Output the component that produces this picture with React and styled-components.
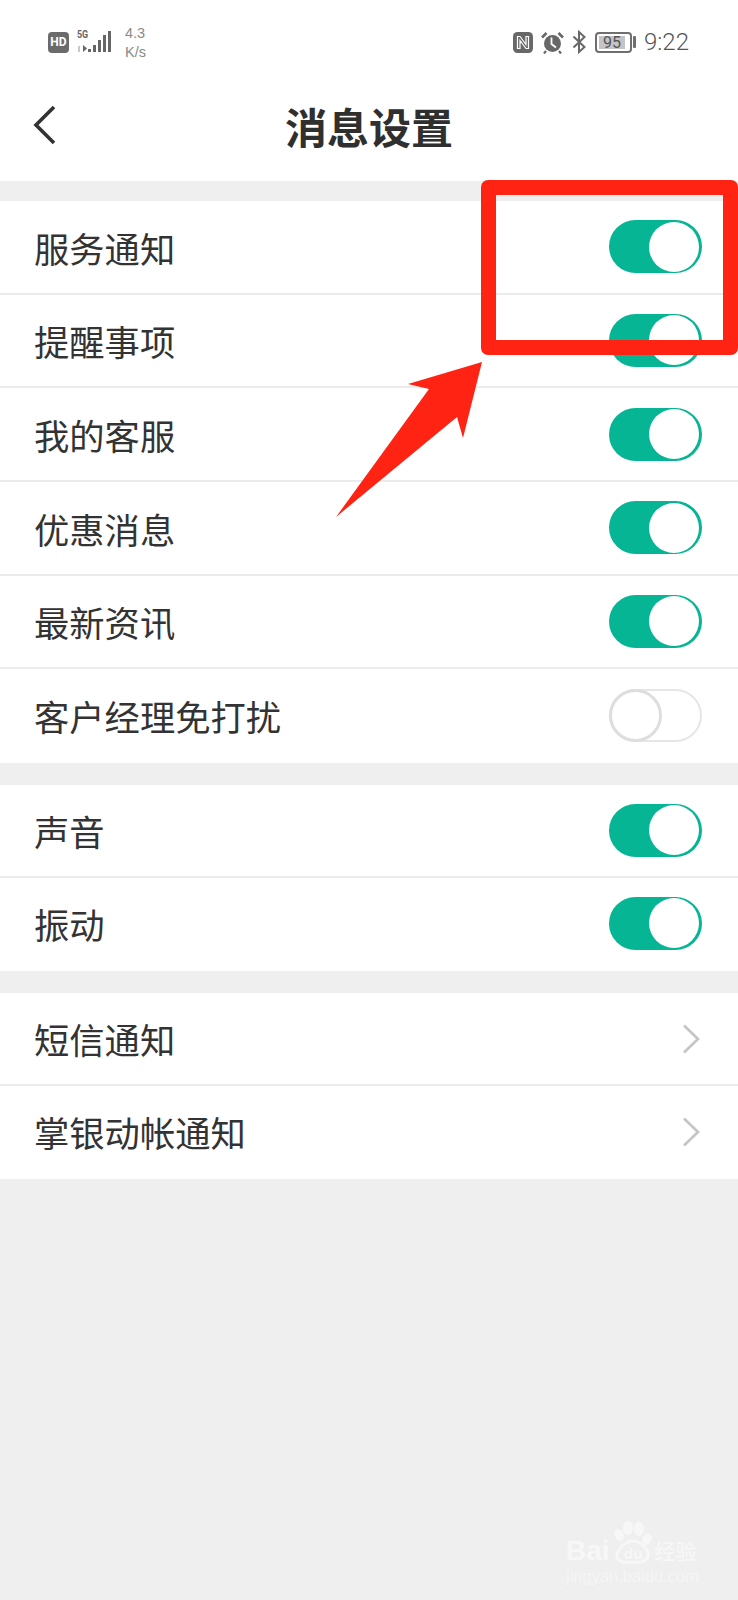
import styled, { createGlobalStyle } from "styled-components";

const GlobalStyle = createGlobalStyle`
  html, body {
    margin: 0;
    padding: 0;
    background: #efefef;
  }
  body {
    font-family: "Noto Sans CJK SC", "Noto Sans", sans-serif;
  }
`;

const Page = styled.div`
  position: relative;
  width: 738px;
  height: 1600px;
  overflow: hidden;
  background: #efefef;
`;

const Header = styled.header`
  height: 181px;
  background: #fff;
  margin-bottom: 20px;
`;

const StatusBar = styled.div`
  height: 85px;
  padding: 22px 49px 0 48px;
  box-sizing: border-box;
  display: flex;
  justify-content: space-between;
  align-items: flex-start;
  color: #6f6f6f;
`;

const StatusGroup = styled.div`
  display: flex;
  align-items: center;
  height: 40px;
  gap: 8px;
`;

const HdBadge = styled.span`
  width: 21px;
  height: 21px;
  border-radius: 4px;
  background: #6b6b6b;
  color: #fff;
  font: 700 12px/21px "Roboto", sans-serif;
  text-align: center;
`;

const SignalWrap = styled.div`
  position: relative;
  width: 34px;
  height: 22px;
`;

const FiveG = styled.span`
  position: absolute;
  left: 0;
  top: -2px;
  font: 700 10.5px/12px "Roboto", sans-serif;
  transform: scaleX(0.85);
  transform-origin: left;
  color: #666;
`;

const Speed = styled.div`
  margin-left: 6px;
  padding-top: 2px;
  font: 400 14.5px/19px "Liberation Sans", sans-serif;
  color: #8a8a8a;
`;

const Battery = styled.div`
  width: 37px;
  height: 21px;
  box-sizing: border-box;
  border: 2px solid #6f6f6f;
  border-radius: 4px;
  padding: 2px 5px 2px 2px;
  display: flex;
`;

const BatteryLevel = styled.div`
  flex: 1;
  background: #c4c4c4;
  color: #555;
  font: 400 16px/13px "Roboto", sans-serif;
  text-align: center;
`;

const BatteryNub = styled.div`
  width: 3px;
  height: 12px;
  margin-left: -7px;
  background: #6f6f6f;
  border-radius: 1px;
`;

const Clock = styled.span`
  font: 300 24px/30px "Roboto", sans-serif;
  color: #555;
`;

const NavBar = styled.div`
  position: relative;
  height: 96px;
  box-sizing: border-box;
  padding-bottom: 14px;
  display: flex;
  align-items: center;
  justify-content: center;
`;

const BackButton = styled.svg`
  position: absolute;
  left: 32px;
  top: 19px;
`;

const Title = styled.h1`
  margin: 0;
  font-size: 42px;
  font-weight: 700;
  line-height: 64px;
  color: #2f2f2f;
`;

const Section = styled.section`
  background: #fff;
  margin-bottom: 22px;
`;

const Row = styled.div`
  position: relative;
  height: ${(props) => props.$height || 93}px;
  padding: 0 36px 0 34px;
  box-sizing: border-box;
  display: flex;
  align-items: center;
  justify-content: space-between;

  &:not(:last-child)::after {
    content: "";
    position: absolute;
    left: 0;
    right: 0;
    bottom: 0;
    height: 2px;
    background: #ebebeb;
  }
`;

const Label = styled.span`
  font-size: 35.3px;
  line-height: 50px;
  color: #333;
`;

const Track = styled.div`
  width: 93px;
  height: 53px;
  margin-top: -2px;
  box-sizing: border-box;
  border-radius: 27px;
  display: flex;
  align-items: center;
  justify-content: ${(props) => (props.$on ? "flex-end" : "flex-start")};
  padding-right: ${(props) => (props.$on ? 3 : 0)}px;
  background: ${(props) => (props.$on ? "#06b593" : "#fff")};
  border: ${(props) => (props.$on ? "none" : "2.5px solid #e6e6e6")};
`;

const Knob = styled.div`
  width: ${(props) => (props.$on ? 50 : 53)}px;
  height: ${(props) => (props.$on ? 50 : 53)}px;
  flex-shrink: 0;
  box-sizing: border-box;
  border-radius: 50%;
  background: #fff;
  margin-left: ${(props) => (props.$on ? 0 : -2.5)}px;
  border: ${(props) => (props.$on ? "none" : "3px solid #dedede")};
`;

const Chevron = styled.svg`
  margin-right: 2px;
`;

const Callout = styled.div`
  position: absolute;
  left: 481px;
  top: 180px;
  width: 257px;
  height: 175px;
  box-sizing: border-box;
  border: 15px solid #fe2312;
  border-radius: 7px;
`;

const Arrow = styled.svg`
  position: absolute;
  left: 330px;
  top: 358px;
`;

const Watermark = styled.div`
  position: absolute;
  left: 566px;
  top: 1520px;
  width: 140px;
  color: #f7f7f7;
`;

const WatermarkLogo = styled.div`
  display: flex;
  align-items: flex-end;
  height: 44px;
  font: 700 28px/26px "Liberation Sans", sans-serif;
`;

const WatermarkCn = styled.span`
  margin-left: 1px;
  font-size: 21px;
  font-weight: 500;
  line-height: 27px;
  font-family: "Noto Sans CJK SC", sans-serif;
`;

const WatermarkUrl = styled.div`
  font: 400 16.5px/20px "Liberation Sans", sans-serif;
  margin-top: 2px;
  color: #f5f5f5;
`;

const Paw = styled.svg`
  margin-left: 4px;
`;

const PawText = styled.text`
  font: 700 15px "Liberation Sans", sans-serif;
  fill: #f7f7f7;
`;

const Toggle = ({ on }) => (
  <Track $on={on}>
    <Knob $on={on} />
  </Track>
);

const SignalBars = () => (
  <SignalWrap>
    <FiveG>5G</FiveG>
    <svg width="34" height="22" viewBox="0 0 34 22">
      <rect x="1" y="15" width="2" height="6" fill="#c8c8c8" />
      <path d="M6 14v7l4-3.5z" fill="#666" />
      <rect x="11" y="18" width="3" height="3" fill="#666" />
      <rect x="16" y="14" width="3" height="7" fill="#666" />
      <rect x="21" y="9" width="3" height="12" fill="#666" />
      <rect x="26" y="4" width="3" height="17" fill="#666" />
      <rect x="31" y="0" width="3" height="21" fill="#666" />
    </svg>
  </SignalWrap>
);

const NfcIcon = () => (
  <svg width="20" height="21" viewBox="0 0 20 21">
    <rect width="20" height="21" rx="4.5" fill="#686868" />
    <path
      d="M4.5 4.5v12h2.5V8.5l6 8h2.5v-12H13v8l-6-8z"
      fill="#686868"
      stroke="#fff"
      strokeWidth="1.2"
    />
  </svg>
);

const AlarmIcon = () => (
  <svg width="23" height="23" viewBox="0 0 23 23">
    <circle cx="11.5" cy="12.5" r="8.5" fill="#686868" />
    <path d="M10.5 6.5v6.5l4.5 3.5" fill="none" stroke="#fff" strokeWidth="1.8" />
    <path d="M1 6.5l4.5-4.5M22 6.5L17.5 2" stroke="#686868" strokeWidth="2.6" />
    <path d="M5 20l-2 2.5M18 20l2 2.5" stroke="#686868" strokeWidth="2.2" />
  </svg>
);

const BluetoothIcon = () => (
  <svg width="15" height="24" viewBox="0 0 15 24">
    <path
      d="M1.5 6.5l11 10.5-5.5 5V2l5.5 5-11 10.5"
      fill="none"
      stroke="#686868"
      strokeWidth="2"
    />
  </svg>
);

const BackIcon = () => (
  <BackButton width="26" height="42" viewBox="0 0 26 42">
    <path d="M22 3L4 21l18 18" fill="none" stroke="#333" strokeWidth="3.6" />
  </BackButton>
);

const ChevronIcon = () => (
  <Chevron width="18" height="30" viewBox="0 0 18 30">
    <path d="M2 1.5L16 15 2 28.5" fill="none" stroke="#c6c6c6" strokeWidth="2.8" />
  </Chevron>
);

// paw mark of the watermark, four toes over an outlined pad
const PawIcon = () => (
  <Paw width="40" height="44" viewBox="0 0 40 44" fill="none">
    <ellipse cx="5" cy="15" rx="4.5" ry="6" fill="#f7f7f7" transform="rotate(-30 5 15)" />
    <ellipse cx="14" cy="8" rx="5" ry="7" fill="#f7f7f7" />
    <ellipse cx="25" cy="9" rx="5" ry="7" fill="#f7f7f7" />
    <ellipse cx="33" cy="19" rx="4.5" ry="6" fill="#f7f7f7" transform="rotate(25 33 19)" />
    <path
      d="M19 21c7 0 16 8 15 15-1 6-9 7-15 6-6 1-15 0-16-5-1-7 9-16 16-16z"
      stroke="#f7f7f7"
      strokeWidth="3"
    />
    <PawText x="10" y="39">du</PawText>
  </Paw>
);

const mainRows = [
  { label: "服务通知", on: true },
  { label: "提醒事项", on: true },
  { label: "我的客服", on: true },
  { label: "优惠消息", on: true },
  { label: "最新资讯", on: true },
  { label: "客户经理免打扰", on: false },
];

const soundRows = [
  { label: "声音", on: true },
  { label: "振动", on: true },
];

const linkRows = ["短信通知", "掌银动帐通知"];

const App = () => {
  return (
    <Page>
      <GlobalStyle />
      <Header>
        <StatusBar>
          <StatusGroup>
            <HdBadge>HD</HdBadge>
            <SignalBars />
            <Speed>
              4.3
              <br />
              K/s
            </Speed>
          </StatusGroup>
          <StatusGroup>
            <NfcIcon />
            <AlarmIcon />
            <BluetoothIcon />
            <Battery>
              <BatteryLevel>95</BatteryLevel>
            </Battery>
            <BatteryNub />
            <Clock>9:22</Clock>
          </StatusGroup>
        </StatusBar>
        <NavBar>
          <BackIcon />
          <Title>消息设置</Title>
        </NavBar>
      </Header>

      <Section>
        {mainRows.map((row) => (
          <Row key={row.label} $height={93.67}>
            <Label>{row.label}</Label>
            <Toggle on={row.on} />
          </Row>
        ))}
      </Section>

      <Section>
        {soundRows.map((row) => (
          <Row key={row.label}>
            <Label>{row.label}</Label>
            <Toggle on={row.on} />
          </Row>
        ))}
      </Section>

      <Section>
        {linkRows.map((label) => (
          <Row key={label}>
            <Label>{label}</Label>
            <ChevronIcon />
          </Row>
        ))}
      </Section>

      <Callout />
      <Arrow width="160" height="165" viewBox="0 0 160 165">
        <path d="M152 4L78 26l21 5L6 159l121-100 6 21z" fill="#fe2312" />
      </Arrow>

      <Watermark>
        <WatermarkLogo>
          Bai
          <PawIcon />
          <WatermarkCn>经验</WatermarkCn>
        </WatermarkLogo>
        <WatermarkUrl>jingyan.baidu.com</WatermarkUrl>
      </Watermark>
    </Page>
  );
};

export default App;
